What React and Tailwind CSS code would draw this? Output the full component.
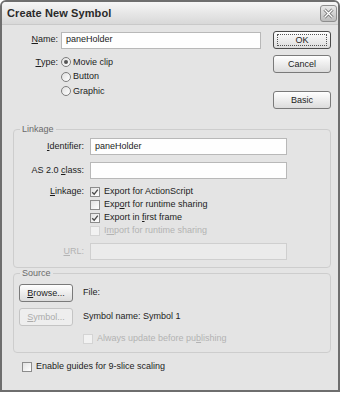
import { useState } from "react";

const font = { fontFamily: '"Liberation Sans", Arial, sans-serif' };

function U({ children }) {
  return <span className="underline underline-offset-[1px]">{children}</span>;
}

function Btn({ children, focused, disabled, className = "" }) {
  return (
    <button
      className={`h-[18px] rounded-[3px] border text-[9px] leading-none flex items-center justify-center ${
        disabled
          ? "border-[#c4c4c4] bg-[#eeeeee] text-[#ababab]"
          : focused
          ? "border-[#4a4a4a] bg-gradient-to-b from-[#ffffff] to-[#dcdcdc] text-[#1c1c1c]"
          : "border-[#7a7a7a] bg-gradient-to-b from-[#ffffff] to-[#dcdcdc] text-[#1c1c1c]"
      } ${className}`}
    >
      {focused ? (
        <span className="flex items-center justify-center w-[calc(100%-6px)] h-[12px] border border-dotted border-[#555]">
          {children}
        </span>
      ) : (
        children
      )}
    </button>
  );
}

function Check({ checked, disabled, label, onChange }) {
  return (
    <div className={`h-[13px] flex items-center gap-[4px] ${disabled ? "text-[#b3b3b3]" : "text-[#1c1c1c]"}`}>
      <span
        onClick={onChange}
        className={`w-[10px] h-[10px] border flex items-center justify-center ${
          disabled ? "border-[#d4d4d4] bg-[#f2f2f2]" : "border-[#8c8c8c] bg-gradient-to-br from-[#e2e2e2] to-[#ffffff]"
        }`}
      >
        {checked && (
          <svg width="8" height="8" viewBox="0 0 8 8">
            <path d="M1.2 4.2 L3.2 6.2 L6.8 1.6" stroke="#4a4a4a" strokeWidth="1.3" fill="none" />
          </svg>
        )}
      </span>
      <span className="text-[9px] leading-none">{label}</span>
    </div>
  );
}

function Radio({ checked, label, onClick }) {
  return (
    <div className="h-[14.5px] flex items-center gap-[2px] text-[#1c1c1c]" onClick={onClick}>
      <span className="w-[10px] h-[10px] rounded-full border border-[#7d7d7d] bg-gradient-to-br from-[#e0e0e0] to-[#ffffff] flex items-center justify-center">
        {checked && <span className="w-[4px] h-[4px] rounded-full bg-[#555]" />}
      </span>
      <span className="text-[9px] leading-none">{label}</span>
    </div>
  );
}

function Field({ value = "", disabled, className = "" }) {
  return (
    <div
      className={`h-[17px] border flex items-center px-[4px] text-[9px] ${
        disabled ? "border-[#cfcfcf] bg-[#ebebeb]" : "border-[#b8b8b8] bg-[#fefefe] text-[#1c1c1c]"
      } ${className}`}
    >
      {value}
    </div>
  );
}

export default function App() {
  const [type, setType] = useState("movie");
  const [checks, setChecks] = useState({ as: true, rt: false, ff: true, guides: false });
  const toggle = (k) => setChecks((c) => ({ ...c, [k]: !c[k] }));

  return (
    <div className="w-[344px] h-[395px] bg-white" style={font}>
      <div className="w-[340px] h-[392px] flex flex-col rounded-t-[6px] border-2 border-[#6e6e6e] bg-[#e4e4e4] overflow-hidden">
        {/* title bar */}
        <div className="h-[23px] flex items-center justify-between pl-[5px] pr-[1px] bg-gradient-to-b from-[#f6f6f6] to-[#d8d8d8] border-b border-[#c9c9c9]">
          <span className="text-[11px] font-bold text-[#2a2a2a] tracking-[0.1px]">Create New Symbol</span>
          <div className="w-[17px] h-[17px] rounded-[3px] border border-[#8e8e8e] bg-gradient-to-b from-[#e8e8e8] to-[#bdbdbd] flex items-center justify-center">
            <svg width="11" height="11" viewBox="0 0 11 11">
              <path d="M1.5 1.5 L9.5 9.5 M9.5 1.5 L1.5 9.5" stroke="#6a6a6a" strokeWidth="3" />
              <path d="M1.5 1.5 L9.5 9.5 M9.5 1.5 L1.5 9.5" stroke="#ffffff" strokeWidth="1.4" />
            </svg>
          </div>
        </div>

        {/* top section */}
        <div className="flex pt-[6px] text-[9px] text-[#1c1c1c]">
          <div className="w-[259px]">
            <div className="flex items-center h-[18px] gap-[3px]">
              <span className="w-[56px] text-right">
                <U>N</U>ame:
              </span>
              <Field value="paneHolder" className="w-[200px]" />
            </div>
            <div className="flex mt-[6px] gap-[3px]">
              <span className="w-[56px] text-right h-[14.5px] flex items-center justify-end">
                <U>T</U>ype:
              </span>
              <div className="flex flex-col">
                <Radio checked={type === "movie"} label="Movie clip" onClick={() => setType("movie")} />
                <Radio checked={type === "button"} label="Button" onClick={() => setType("button")} />
                <Radio checked={type === "graphic"} label="Graphic" onClick={() => setType("graphic")} />
              </div>
            </div>
          </div>
          <div className="ml-[12px] w-[58px] flex flex-col">
            <Btn focused className="w-[58px]">OK</Btn>
            <Btn className="w-[58px] mt-[6px]">Cancel</Btn>
            <Btn className="w-[58px] mt-[18px]">Basic</Btn>
          </div>
        </div>

        {/* linkage */}
        <fieldset className="ml-[11px] mt-[15px] w-[318px] border border-[#cdcdcd] rounded-[4px] pb-[7px] text-[9px] text-[#1c1c1c]">
          <legend className="ml-[6px] px-[2px] text-[9px] leading-[11px] text-[#6a6a6a]">Linkage</legend>
          <div className="flex items-center gap-[6px] mt-[3px]">
            <span className="w-[70px] text-right">
              <U>I</U>dentifier:
            </span>
            <Field value="paneHolder" className="w-[197px]" />
          </div>
          <div className="flex items-center gap-[6px] mt-[7px]">
            <span className="w-[70px] text-right">
              AS 2.0 <U>c</U>lass:
            </span>
            <Field className="w-[197px]" />
          </div>
          <div className="flex gap-[6px] mt-[6px]">
            <span className="w-[70px] text-right h-[13px] flex items-center justify-end">
              <U>L</U>inkage:
            </span>
            <div className="flex flex-col">
              <Check checked={checks.as} onChange={() => toggle("as")} label="Export for ActionScript" />
              <Check
                checked={checks.rt}
                onChange={() => toggle("rt")}
                label={
                  <>
                    Exp<U>o</U>rt for runtime sharing
                  </>
                }
              />
              <Check
                checked={checks.ff}
                onChange={() => toggle("ff")}
                label={
                  <>
                    Export in <U>f</U>irst frame
                  </>
                }
              />
              <Check
                disabled
                label={
                  <>
                    I<U>m</U>port for runtime sharing
                  </>
                }
              />
            </div>
          </div>
          <div className="flex items-center gap-[6px] mt-[6px]">
            <span className="w-[70px] text-right text-[#b3b3b3]">
              <U>U</U>RL:
            </span>
            <Field disabled className="w-[197px]" />
          </div>
        </fieldset>

        {/* source */}
        <fieldset className="ml-[11px] w-[318px] border border-[#cdcdcd] rounded-[4px] pl-[5px] pb-[7px] text-[9px] text-[#1c1c1c]">
          <legend className="ml-[1px] px-[2px] text-[9px] leading-[11px] text-[#6a6a6a]">Source</legend>
          <div className="flex items-center gap-[10px] mt-[5px]">
            <Btn className="w-[54px] h-[17px]">
              <span>
                <U>B</U>rowse...
              </span>
            </Btn>
            <span>File:</span>
          </div>
          <div className="flex items-center gap-[10px] mt-[6px]">
            <Btn disabled className="w-[54px] h-[17px]">
              <span>
                <U>S</U>ymbol...
              </span>
            </Btn>
            <span>Symbol name: Symbol 1</span>
          </div>
          <div className="ml-[64px] mt-[6px]">
            <Check
              disabled
              label={
                <>
                  Always update before pu<U>b</U>lishing
                </>
              }
            />
          </div>
        </fieldset>

        <div className="ml-[20px] mt-[7px]">
          <Check checked={checks.guides} onChange={() => toggle("guides")} label="Enable guides for 9-slice scaling" />
        </div>
      </div>
    </div>
  );
}
